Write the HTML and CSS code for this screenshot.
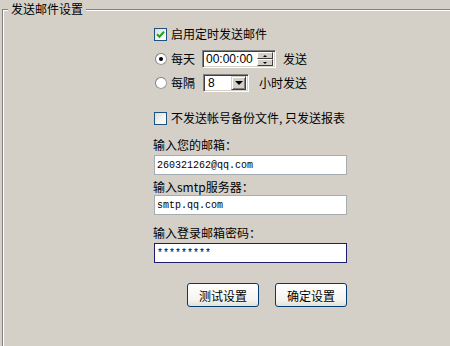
FILE: index.html
```html
<!DOCTYPE html>
<html lang="zh-CN">

<head>
    <meta charset="UTF-8">
    <meta name="viewport" content="width=device-width, initial-scale=1.0">
    <title>发送邮件设置</title>

    <link rel="stylesheet" href="styles.css">
</head>

<body>
    <fieldset class="grupo">
        <legend class="grupo-titulo">发送邮件设置</legend>

        <div class="form">
            <div class="linha linha-check">
                <span class="checkbox">
                    <svg width="9" height="9" viewBox="0 0 9 9">
                        <path d="M1 4.2 L3.5 6.7 L8 1.8" fill="none" stroke="#21a121" stroke-width="2"/>
                    </svg>
                </span>
                <span>启用定时发送邮件</span>
            </div>

            <div class="linha linha-radio">
                <span class="radio ativo"></span>
                <span class="radio-texto">每天</span>
                <span class="hora">
                    <span class="hora-texto">00:00:00</span>
                    <span class="spin">
                        <span class="spin-btn"><i class="seta-cima"></i></span>
                        <span class="spin-btn"><i class="seta-baixo"></i></span>
                    </span>
                </span>
                <span class="depois">发送</span>
            </div>

            <div class="linha linha-radio2">
                <span class="radio"></span>
                <span class="radio-texto">每隔</span>
                <span class="combo">
                    <span class="combo-texto">8</span>
                    <span class="combo-btn"><i class="seta-combo"></i></span>
                </span>
                <span class="depois depois-combo">小时发送</span>
            </div>

            <div class="linha linha-check2">
                <span class="checkbox"></span>
                <span>不发送帐号备份文件, 只发送报表</span>
            </div>

            <div class="rotulo rotulo-1">输入您的邮箱：</div>
            <input class="campo campo-1" type="text" value="260321262@qq.com">

            <div class="rotulo rotulo-2">输入smtp服务器：</div>
            <input class="campo" type="text" value="smtp.qq.com">

            <div class="rotulo rotulo-3">输入登录邮箱密码：</div>
            <input class="campo campo-foco" type="text" value="*********">

            <div class="botoes">
                <button class="botao">测试设置</button>
                <button class="botao">确定设置</button>
            </div>
        </div>
    </fieldset>
</body>

</html>
```

FILE: styles.css
```css
* {
    font-family: "Noto Sans CJK SC", sans-serif;
    font-size: 12px;
    box-sizing: border-box;
}

html,
body {
    margin: 0;
    padding: 0;
    overflow: hidden;
    background-color: #d4d0c8;
    color: #000;
}

/* a caixa do grupo continua para fora da janela: sem borda direita e de baixo */
.grupo {
    margin: 0 0 0 2px;
    padding: 0;
    width: 448px;
    height: 346px;
    border: none;
    border-top: 1px solid #808080;
    border-left: 1px solid #808080;
    box-shadow: inset 1px 1px 0 #fff;
}

.grupo-titulo {
    margin-left: 5px;
    padding: 0 3px;
    line-height: 18px;
    height: 18px;
    background-color: #d4d0c8;
}

.form {
    padding-left: 151px;
    width: 344px;
    line-height: 16px;
}

.linha {
    display: flex;
    align-items: center;
    height: 20px;
}

.linha-check {
    margin-top: 6px;
}

.linha-radio {
    margin-top: 6px;
    height: 18px;
}

.linha-radio2 {
    margin-top: 6px;
    height: 18px;
}

.linha-check2 {
    margin-top: 16px;
}

/* caixas de marcar no estilo XP */
.checkbox {
    width: 13px;
    height: 13px;
    margin-right: 4px;
    border: 1px solid #1c5180;
    background: linear-gradient(135deg, #dcdcd7 0%, #f4f4f0 60%, #fff 100%);
    display: flex;
    align-items: center;
    justify-content: center;
}

.radio {
    width: 12px;
    height: 12px;
    margin-left: 1px;
    margin-right: 4px;
    border-radius: 50%;
    border: 1px solid #9c9c9c;
    border-top-color: #808080;
    border-left-color: #808080;
    background-color: #fff;
    display: flex;
    align-items: center;
    justify-content: center;
}

.radio.ativo::after {
    content: "";
    width: 4px;
    height: 4px;
    border-radius: 50%;
    background-color: #000;
}

.radio-texto {
    margin-right: 7px;
}

.hora,
.combo {
    display: flex;
    align-items: center;
    height: 18px;
    background-color: #fff;
    border: 1px solid;
    border-color: #808080 #fff #fff #808080;
    box-shadow: inset 1px 1px 0 #404040, inset -1px -1px 0 #d4d0c8;
}

.hora {
    width: 74px;
    padding: 2px 2px 2px 3px;
}

.hora-texto,
.combo-texto {
    font-family: "Liberation Sans", Arial, sans-serif;
    flex-grow: 1;
}

.spin {
    display: flex;
    flex-direction: column;
    width: 16px;
    height: 14px;
}

.spin-btn {
    flex-grow: 1;
    background-color: #d4d0c8;
    border: 1px solid;
    border-color: #fff #404040 #404040 #fff;
    display: flex;
    align-items: center;
    justify-content: center;
}

.seta-cima,
.seta-baixo {
    width: 0;
    height: 0;
    border-left: 2px solid transparent;
    border-right: 2px solid transparent;
}

.seta-cima {
    border-bottom: 2px solid #000;
}

.seta-baixo {
    border-top: 2px solid #000;
}

.depois {
    margin-left: 7px;
}

.depois-combo {
    margin-left: 10px;
}

.combo {
    width: 46px;
    margin-left: 1px;
    padding: 2px;
}

.combo-texto {
    padding-left: 2px;
}

.combo-btn {
    width: 15px;
    height: 14px;
    background-color: #d4d0c8;
    border: 1px solid;
    border-color: #d4d0c8 #404040 #404040 #d4d0c8;
    box-shadow: inset 1px 1px 0 #fff, inset -1px -1px 0 #808080;
    display: flex;
    align-items: center;
    justify-content: center;
}

.seta-combo {
    width: 0;
    height: 0;
    border-left: 4px solid transparent;
    border-right: 4px solid transparent;
    border-top: 4px solid #000;
}

.rotulo {
    height: 16px;
    line-height: 16px;
    margin-left: -1px;
}

.rotulo-1 {
    margin-top: 9px;
    margin-bottom: 2px;
}

.rotulo-2 {
    margin-top: 4px;
}

.rotulo-3 {
    margin-top: 10px;
    margin-bottom: 2px;
}

.campo {
    display: block;
    width: 193px;
    height: 20px;
    margin: 0;
    padding: 0 2px;
    border: 1px solid #a5acb2;
    background-color: #fff;
    font-family: "Liberation Mono", monospace;
    font-size: 10px;
    color: #000;
    outline: none;
}

.campo-foco {
    border-color: #1c1c6e;
}

.botoes {
    display: flex;
    justify-content: flex-end;
    gap: 16px;
    width: 193px;
    margin-top: 20px;
}

.botao {
    width: 72px;
    height: 24px;
    padding: 0;
    border: 1px solid #003c74;
    border-radius: 3px;
    background: linear-gradient(#ffffff 0%, #f5f4ef 70%, #e3e1d6 100%);
    color: #000;
}
```
